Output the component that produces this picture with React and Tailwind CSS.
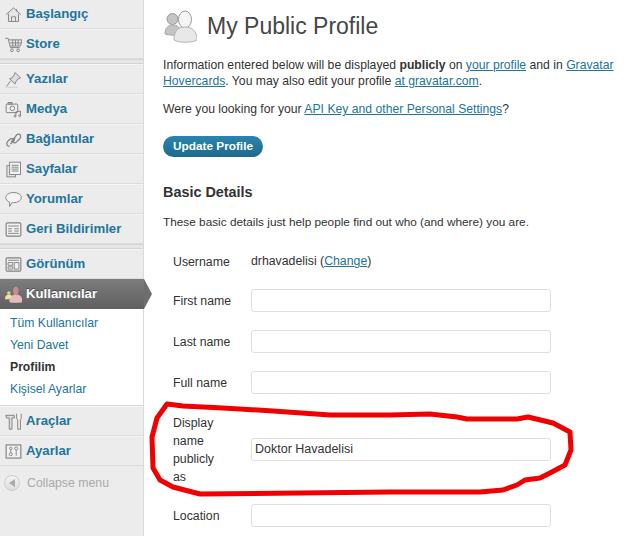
const menuTop = [
  { label: 'Başlangıç', icon: 'home' },
  { label: 'Store', icon: 'cart' },
]
const menuContent = [
  { label: 'Yazılar', icon: 'pin' },
  { label: 'Medya', icon: 'media' },
  { label: 'Bağlantılar', icon: 'link' },
  { label: 'Sayfalar', icon: 'pages' },
  { label: 'Yorumlar', icon: 'comment' },
  { label: 'Geri Bildirimler', icon: 'feedback' },
]

function MenuIcon({ name }) {
  const common = { width: 17, height: 17, viewBox: '0 0 22 22', fill: 'none', stroke: '#808080', strokeWidth: 1.2 }
  if (name === 'home') return (
    <svg {...common}><path d="M1.500 11 11 2.500l9.500 8.500M4.500 10v10h13V10M8.500 20v-6h5v6M15 4v3" fill="#e4e4e4" /></svg>
  )
  if (name === 'cart') return (
    <svg {...common}><path d="M0 3h4l3 12h12M5 5h17l-2 8H7M10 5v8M13.500 5v8M17 5v8M6 9h15" /><circle cx="9" cy="18.500" r="1.800" /><circle cx="17" cy="18.500" r="1.800" /></svg>
  )
  if (name === 'pin') return (
    <svg {...common}><path d="M13 2l7 7-3 1-3 4-1 3-7-7 3-1 3-4z" fill="#ddd" /><path d="M7 13l-5 7" /><path d="M1 21h15" stroke="#ccc" /></svg>
  )
  if (name === 'media') return (
    <svg {...common}><rect x="1.500" y="4" width="15" height="11" rx="1" fill="#eee" /><rect x="4" y="2" width="5" height="2" /><circle cx="9.500" cy="9.500" r="3" /><path d="M14 19v-5l6-1v6" /><circle cx="13" cy="19.500" r="1.300" /><circle cx="19" cy="19" r="1.300" /></svg>
  )
  if (name === 'link') return (
    <svg {...common} strokeWidth="1.600"><path d="M6 20c-3 0-5-3-3-6l3-3c2-2 5-1 6 1l-5 5" /><path d="M10 12l5-7c2-2 5-1 5 1 1 2 0 3-1 4l-4 4c-2 2-4 1-5 0" /><path d="M8 14l5-5" /></svg>
  )
  if (name === 'pages') return (
    <svg {...common}><rect x="2.500" y="6" width="11" height="14.500" fill="#e4e4e4" /><rect x="6" y="1.500" width="14" height="16" fill="#f4f4f4" /><path d="M8.500 5.500h9M8.500 8h9M8.500 10.500h9M8.500 13h9" /></svg>
  )
  if (name === 'comment') return (
    <svg {...common}><path d="M11 2c5.500 0 10 2.500 10 6.500s-4.500 6.500-10 6.500c-1 0-1.500 0-2 0l-3 5v-5.500c-3-1-5-3.500-5-6C1 4.500 5.500 2 11 2z" fill="#f4f4f4" /></svg>
  )
  if (name === 'feedback') return (
    <svg {...common}><rect x="1.500" y="2.500" width="19" height="17" rx="1.500" fill="#f2f2f2" strokeWidth="1.500" /><path d="M4 6.500h14M4 10h5M12 10h6M4 13h5M12 13h6M4 16h14" /></svg>
  )
  if (name === 'layout') return (
    <svg {...common}><rect x="1.500" y="2.500" width="19" height="17" rx="1.500" fill="#f2f2f2" strokeWidth="1.500" /><path d="M4 5.500h14M4 8.500h6v3.500H4zM4 14h6v3H4zM12 8.500h6V17h-6z" /></svg>
  )
  if (name === 'users') return (
    <svg {...common} stroke="none"><ellipse cx="14" cy="6" rx="3.500" ry="5" fill="#c98a92" /><path d="M6 21c-1.500-6 2-10 8-10s9.500 4 8 10c-3 1-13 1-16 0z" fill="#e8b9bc" /><circle cx="5" cy="9" r="2.300" fill="#e0d07f" /><path d="M0 17c0-4 2-6 5-6s3 1 4 3l-4 3z" fill="#efe3a2" /></svg>
  )
  if (name === 'tools') return (
    <svg {...common}><path d="M1 3h11v3.500H9V21H5.500V6.500H2z" fill="#ddd" /><path d="M15 1v6l1.500 2v12H20V9l1-2V1" fill="#eee" /></svg>
  )
  return (
    <svg {...common}><rect x="1.500" y="2.500" width="19" height="17" fill="#f2f2f2" strokeWidth="1.500" /><circle cx="7.500" cy="7" r="1.600" /><path d="M7.500 9v3" /><circle cx="7.500" cy="14.500" r="2" /><circle cx="14.500" cy="7" r="2" /><path d="M14.500 9.500v7" /></svg>
  )
}

function MenuRow({ label, icon, last }) {
  return (
    <a href="#" className={`flex h-[30px] items-center pl-[4px] border-t border-t-[#f5f5f5] ${last ? '' : 'border-b border-b-[#dcdcdc]'} bg-[#ececec] text-[13.200px] font-bold text-[#21759b]`}>
      <span className="flex w-[22px] justify-start pl-[1px]"><MenuIcon name={icon} /></span>
      <span className="whitespace-nowrap">{label}</span>
    </a>
  )
}

function Separator() {
  return <div className="h-[5px] bg-[#e6e6e6] border-y border-y-[#d4d4d4]" />
}

function Sidebar() {
  return (
    <aside className="relative w-[144px] shrink-0 h-[536px] bg-[#ececec] border-r border-r-[#dadada]">
      <div className="-mt-[1px]">
        {menuTop.map((m) => <MenuRow key={m.label} {...m} />)}
        <Separator />
        {menuContent.map((m) => <MenuRow key={m.label} {...m} />)}
        <Separator />
        <MenuRow label="Görünüm" icon="layout" />
        <div className="relative flex h-[30px] items-center pl-[4px] bg-gradient-to-b from-[#7d7d7d] to-[#5f5f5f] text-[13.200px] font-bold text-white [text-shadow:0_-1px_0_rgba(0,0,0,0.4)] w-[144px]">
          <span className="flex w-[22px] justify-start pl-[1px]"><MenuIcon name="users" /></span>
          <span>Kullanıcılar</span>
          <span className="absolute left-[144px] top-0 h-[30px] w-[8px] bg-[#6e6e6e] [clip-path:polygon(0_0,100%_50%,0_100%)]" />
        </div>
        <ul className="bg-white h-[97px] pt-[3px] pl-[10px] text-[12.200px] text-[#21759b] border-b border-b-[#d9d9d9]">
          <li className="h-[22px] leading-[22px]">Tüm Kullanıcılar</li>
          <li className="h-[22px] leading-[22px]">Yeni Davet</li>
          <li className="h-[22px] leading-[22px] font-bold text-[#333]">Profilim</li>
          <li className="h-[22px] leading-[22px]">Kişisel Ayarlar</li>
        </ul>
        <MenuRow label="Araçlar" icon="tools" />
        <MenuRow label="Ayarlar" icon="settings" />
        <div className="flex items-center pl-[4px] pt-[8px] text-[12.300px] text-[#aaa]">
          <span className="flex h-[16px] w-[16px] items-center justify-center rounded-full border border-[#ccc] bg-gradient-to-b from-[#f5f5f5] to-[#ddd]">
            <span className="h-0 w-0 border-y-[4px] border-y-transparent border-r-[6px] border-r-[#aaa] -ml-[1px]" />
          </span>
          <span className="ml-[7px]">Collapse menu</span>
        </div>
      </div>
    </aside>
  )
}

function ProfileIcon() {
  return (
    <svg width="34" height="34" viewBox="0 0 34 34">
      <circle cx="9.500" cy="10" r="5.500" fill="#c4c4c4" stroke="#999" />
      <path d="M2 25c0-6 3-9 8-9s8 3 8 9c-4 1.500-12 1.500-16 0z" fill="#c4c4c4" stroke="#aaa" />
      <ellipse cx="22" cy="10.500" rx="6.500" ry="8.500" fill="#f4f4f4" stroke="#999" />
      <path d="M11 31c0-9 4-13 11-13s12 4 12 13c-5 3-18 3-23 0z" fill="#e8e8e8" stroke="#b5b5b5" />
    </svg>
  )
}

function FormRow({ label, value, children, className = '' }) {
  return (
    <div className={`flex items-center pl-[10px] ${className}`}>
      <div className="w-[78px] shrink-0 leading-[18px]">{label}</div>
      {children ?? (
        <input readOnly value={value ?? ''} className="h-[23px] w-[300px] rounded-[3px] border border-[#dfdfdf] bg-white px-[3px] text-[12.500px] text-[#333] outline-none" />
      )}
    </div>
  )
}

function RedCircle() {
  return (
    <svg className="pointer-events-none absolute left-0 top-0" width="637" height="536" viewBox="0 0 637 536" fill="none">
      <path
        d="M167 404 183 406 223 408 273 411 330 415 390 415 430 414 457 417 467 419 517 419 528 417 553 423 570 432 571 450 565 465 550 473 540 478 525 480 517 485 503 490 480 492 390 492 200 494 173 487 160 480 153 468 152 437 157 418z"
        stroke="#f00000"
        strokeWidth="5"
        strokeLinejoin="round"
      />
    </svg>
  )
}

export default function App() {
  return (
    <div className="relative flex h-[536px] w-[637px] overflow-hidden bg-white font-['Liberation_Sans',Arial,sans-serif] text-[#333]">
      <Sidebar />
      <main className="flex-1 pl-[19px] pr-[12px] text-[12.200px]">
        <div className="flex items-center h-[50px] pt-[2px]">
          <ProfileIcon />
          <h1 className="ml-[10px] text-[23px] text-[#464646]">My Public Profile</h1>
        </div>
        <p className="mt-[7px] leading-[16px]">
          Information entered below will be displayed <b>publicly</b> on <a href="#" className="text-[#21759b] underline">your profile</a> and in <a href="#" className="text-[#21759b] underline">Gravatar Hovercards</a>. You may also edit your profile <a href="#" className="text-[#21759b] underline">at gravatar.com</a>.
        </p>
        <p className="mt-[12px] leading-[16px]">
          Were you looking for your <a href="#" className="text-[#21759b] underline">API Key and other Personal Settings</a>?
        </p>
        <button className="mt-[19px] h-[21px] rounded-full bg-gradient-to-b from-[#2a85ae] to-[#1e6a8d] px-[10px] text-[11.800px] font-bold text-white">Update Profile</button>
        <h3 className="mt-[26px] text-[14.400px] font-bold leading-[18px]">Basic Details</h3>
        <p className="mt-[13px] text-[11.800px] leading-[16px]">These basic details just help people find out who (and where) you are.</p>
        <div className="mt-[9px] text-[12.300px]">
          <FormRow label="Username" className="h-[41px] pt-[4px]">
            <span>drhavadelisi (<a href="#" className="text-[#21759b] underline">Change</a>)</span>
          </FormRow>
          <FormRow label="First name" className="h-[41px]" />
          <FormRow label="Last name" className="h-[41px]" />
          <FormRow label="Full name" className="h-[41px]" />
          <FormRow label={<span className="relative top-[1px]">Display<br />name<br />publicly<br />as</span>} value="Doktor Havadelisi" className="h-[92px]" />
          <FormRow label="Location" className="h-[41px]" />
        </div>
      </main>
      <RedCircle />
    </div>
  )
}
